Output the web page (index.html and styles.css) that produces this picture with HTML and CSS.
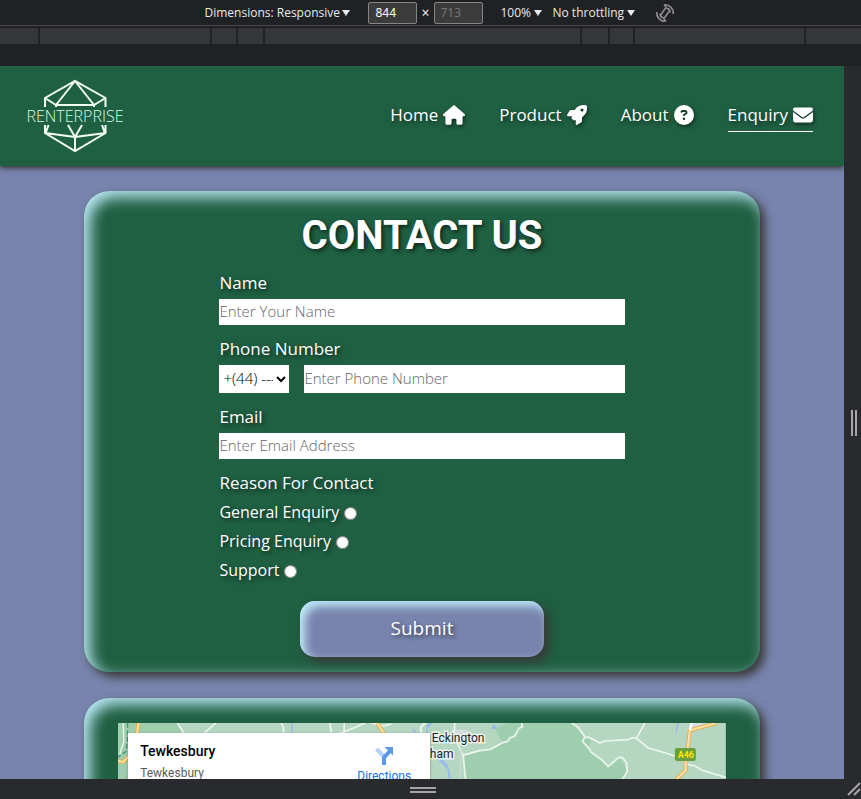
FILE: index.html
```html
<!DOCTYPE html>
<html lang="en">
<head>
<meta charset="utf-8">
<meta name="viewport" content="width=device-width, initial-scale=1">
<title>Renterprise - Enquiry</title>
<link rel="stylesheet" href="styles.css">
</head>
<body>
<div class="toolbar">
  <span class="picker"><select aria-label="Device"><option>Dimensions: Responsive</option></select></span>
  <div class="size">
    <input type="text" value="844" aria-label="Width">
    <span>×</span>
    <input type="text" placeholder="713" aria-label="Height">
  </div>
  <span class="picker"><select aria-label="Zoom"><option>100%</option></select></span>
  <span class="picker"><select aria-label="Throttling"><option>No throttling</option></select></span>
  <button class="rotate" type="button" aria-label="Rotate">
    <svg viewBox="0 0 20 20" width="20" height="20" fill="none" stroke="#8b8b8d" stroke-width="1.6">
      <rect x="7.600" y="5" width="4.800" height="10" rx="1.500" transform="rotate(35 10 10)"/>
      <path d="M1.800 9A8.300 8.300 0 0 0 11 18.200M5 10.500A5.500 5.500 0 0 0 7 15M11 18.200L8.500 15.500M18.200 11A8.300 8.300 0 0 0 9 1.800M15 9.500A5.500 5.500 0 0 0 13 5M9 1.800L11.500 4.500"/>
    </svg>
  </button>
</div>
<div class="ruler"><i></i><i></i><i></i><i></i><i></i><i></i><i></i><i></i><i></i></div>

<div class="stage">
  <div class="device">
    <header class="site-header">
      <a class="logo" href="#" aria-label="Renterprise">
        <svg viewBox="0 0 104 80" width="104" height="80">
          <g fill="none" stroke="#f1fff4" stroke-width="2">
            <path d="M22 31V22L52 5L82.500 22V31M22 22L33 29H71L82.500 22M33 31V29L52 5L71 29V31"/>
            <path d="M22 49V57L52 75L82.500 57V49M22 57L52 61L82.500 57M52 61V75M45 49L52 61L59 49M25.500 49L23 56M79 49L81.500 56"/>
          </g>
          <text x="52" y="46" text-anchor="middle">RENTERPRISE</text>
        </svg>
      </a>
      <nav class="nav">
        <a href="#">Home <svg viewBox="0 0 576 512" width="22" height="20"><path d="M575.8 255.5c0 18-15 32.100-32 32.100h-32l.7 160.200c0 2.700-.2 5.400-.5 8.100V472c0 22.100-17.900 40-40 40H392c-22.100 0-40-17.900-40-40V384c0-17.700-14.300-32-32-32H256c-17.700 0-32 14.300-32 32v88c0 22.100-17.900 40-40 40H104c-22.100 0-40-17.900-40-40V287.600H32c-18 0-32-14-32-32.100c0-9 3-17 10-24L266.400 8c7-7 15-8 22-8s15 2 21 7L564.800 231.500c8 7 12 15 11 24z"/></svg></a>
        <a href="#">Product <svg viewBox="0 0 512 512" width="20" height="20"><path d="M156.6 384.9L125.7 354c-8.5-8.5-11.5-20.8-7.7-32.2c3-8.9 7-20.5 11.8-33.8L24 288c-8.6 0-16.6-4.6-20.9-12.1s-4.2-16.7 .2-24.1l52.5-88.5c13-21.9 36.5-35.3 61.9-35.3l82.3 0c2.400-4 4.800-7.700 7.200-11.300C289.100-4.100 411.100-8.100 483.900 5.300c11.600 2.100 20.600 11.200 22.800 22.800c13.400 72.900 9.300 194.800-111.400 276.700c-3.500 2.400-7.300 4.800-11.300 7.200v82.300c0 25.400-13.400 49-35.300 61.900l-88.500 52.500c-7.400 4.400-16.600 4.500-24.100 .2s-12.100-12.200-12.100-20.900V380.800c-14.100 4.900-26.400 8.900-35.700 11.900c-11.200 3.600-23.400 .5-31.800-7.800zM384 168a40 40 0 1 0 0-80 40 40 0 1 0 0 80z"/></svg></a>
        <a href="#">About <svg viewBox="0 0 512 512" width="20" height="20"><path fill-rule="evenodd" d="M256 512A256 256 0 1 0 256 0a256 256 0 1 0 0 512zM169.800 165.300c7.900-22.300 29.100-37.300 52.800-37.300h58.300c34.900 0 63.100 28.300 63.100 63.100c0 22.600-12.100 43.500-31.700 54.800L280 264.400c-.2 13-10.900 23.600-24 23.600c-13.300 0-24-10.700-24-24V250.500c0-8.600 4.600-16.500 12.100-20.800l44.300-25.400c4.700-2.700 7.600-7.700 7.600-13.100c0-8.400-6.800-15.100-15.100-15.100H222.600c-3.400 0-6.400 2.100-7.500 5.300l-.4 1.200c-4.400 12.500-18.200 19-30.600 14.600s-19-18.200-14.600-30.600zM224 352a32 32 0 1 1 64 0 32 32 0 1 1 -64 0z"/></svg></a>
        <a class="active" href="#">Enquiry <svg viewBox="0 0 512 512" width="20" height="20"><path d="M48 64C21.500 64 0 85.500 0 112c0 15.100 7.100 29.300 19.200 38.400L236.800 313.600c11.400 8.500 27 8.500 38.400 0L492.800 150.400c12.100-9.100 19.200-23.300 19.200-38.400c0-26.500-21.500-48-48-48H48zM0 176V384c0 35.300 28.700 64 64 64H448c35.300 0 64-28.700 64-64V176L294.400 339.200c-22.800 17.100-54 17.100-76.800 0L0 176z"/></svg></a>
      </nav>
    </header>

    <main>
      <section class="card contact">
        <h1>CONTACT US</h1>
        <form>
          <label class="label" for="name">Name</label>
          <input class="field" id="name" type="text" placeholder="Enter Your Name">
          <label class="label" for="phone">Phone Number</label>
          <div class="phone">
            <select class="code" aria-label="Country code"><option>+(44) ---</option></select>
            <input class="field" id="phone" type="tel" placeholder="Enter Phone Number">
          </div>
          <label class="label" for="email">Email</label>
          <input class="field" id="email" type="email" placeholder="Enter Email Address">
          <fieldset>
            <legend class="label">Reason For Contact</legend>
            <div class="choice"><label for="general">General Enquiry</label><input type="radio" name="reason" id="general"></div>
            <div class="choice"><label for="pricing">Pricing Enquiry</label><input type="radio" name="reason" id="pricing"></div>
            <div class="choice"><label for="support">Support</label><input type="radio" name="reason" id="support"></div>
          </fieldset>
          <button class="submit" type="submit">Submit</button>
        </form>
      </section>

      <section class="card location">
        <div class="map">
          <svg class="map-art" viewBox="0 0 608 200" preserveAspectRatio="xMidYMin slice" aria-hidden="true">
            <rect width="608" height="200" fill="#b5d7c2"/>
            <g transform="translate(-48 -83) scale(.33333)" fill="none">
              <path d="M144 249H325L345 285H174V417H144Z" fill="#9fceaf"/>
              <path d="M345 285L323 249M438 249L404 279M634 249L641 262V285M780 249L785 285M823 249V275L795 285M823 275L860 260L885 249M905 249L940 258L965 252M1068 249L1052 262L1056 285" stroke="#eef5f0" stroke-width="5"/>
              <path d="M667 249V285M1028 267L1044 285M1085 249L1072 262L1070 285M1080 316L1098 340L1116 360L1135 385L1140 417M144 395L150 390" stroke="#94b9ef" stroke-width="4"/>
              <path d="M173 249V300L168 335L144 352" stroke="#3f9c6b" stroke-width="4" stroke-dasharray="14 7"/>
              <path d="M160 249L162 305L150 342" stroke="#eef5f0" stroke-width="4"/>
              <path d="M206 249L200 290M144 363L160 366L176 350M922 249L945 285" stroke="#e8b04a" stroke-width="12"/>
              <path d="M206 249L200 290M144 363L160 366L176 350M922 249L945 285" stroke="#fbe2a8" stroke-width="6"/>
            </g>
            <g transform="translate(302 -83) scale(.33333)" fill="none">
              <path d="M308 249L305 265L290 290L265 303L212 328L130 345L137 417L150 680H560L608 417L622 395L600 352L565 380L510 335L490 305L495 290L455 249Z" fill="#9fceaf"/>
              <path d="M225 265L262 249H308L305 265L290 285L265 303L245 302Z" fill="#9fceaf"/>
              <path d="M95 268L140 270L155 280L150 312H115Z" fill="#d3dcd8"/>
              <path d="M498 292L513 300L508 322L492 306Z" fill="#9fceaf"/>
              <path d="M815 249H860L815 268Z" fill="#dadfe4"/>
              <path d="M213 266L220 256L232 257L225 267Z" fill="#94b9ef"/>
              <path d="M775 249L768 277M20 262L30 249M28 318L58 352L85 385L90 417" stroke="#94b9ef" stroke-width="4"/>
              <path d="M60 358L82 380" stroke="#94b9ef" stroke-width="9"/>
              <path d="M0 270L12 249M105 249L102 290L130 345L137 417L142 550M128 346L180 332L212 328L245 310L265 303L268 295L285 287L297 265L308 260L305 249M455 249L475 262L495 290L488 305L508 325L513 336L535 352L545 358L565 380L597 352L608 353L621 370L622 395L608 417L590 500M495 292L508 292L540 309L555 303L625 299L637 293L650 295L675 249M650 295L685 324L745 341L765 349M798 372L825 378L850 392L918 412" stroke="#edf4ee" stroke-width="5"/>
              <path d="M124 330L120 417" stroke="#cbd8d3" stroke-width="4"/>
              <path d="M890 249L810 271L803 330L797 370L798 390L770 418L740 460" stroke="#e8b04a" stroke-width="12"/>
              <path d="M890 249L810 271L803 330L797 370L798 390L770 418L740 460" stroke="#fbe2b0" stroke-width="6"/>
              <path d="M815 249L810 270" stroke="#fff" stroke-width="7"/>
            </g>
            <g class="map-text">
              <text x="314" y="19">Eckington</text>
              <text x="312" y="35">ham</text>
            </g>
            <rect x="557" y="25" width="21" height="13" rx="2" fill="#689f38"/>
            <text class="map-road" x="568" y="35" text-anchor="middle">A46</text>
          </svg>
          <div class="place">
            <div>
              <h2>Tewkesbury</h2>
              <p>Tewkesbury</p>
            </div>
            <a href="#">
              <svg viewBox="0 0 18 18" width="18" height="18"><path d="M1.500 2L9 9.500" stroke="#b5d1f6" stroke-width="4" fill="none"/><path d="M9 18V10.500L15 4" stroke="#5a9ae6" stroke-width="4" fill="none"/><path d="M9.500 0H18V8.500Z" fill="#5a9ae6"/></svg>
              Directions
            </a>
          </div>
        </div>
      </section>
    </main>
  </div>
  <div class="handle-right"><i></i></div>
  <div class="handle-bottom"><i></i></div>
  <div class="handle-corner"><svg viewBox="0 0 14 14" width="14" height="14"><path d="M1 13L13 1M7 13L13 7" stroke="#a6a6a6" stroke-width="2"/></svg></div>
</div>
</body>
</html>
```
FILE: styles.css
```css
* { box-sizing: border-box; }

body {
  margin: 0;
  height: 100vh;
  display: flex;
  flex-direction: column;
  overflow: hidden;
  background: #202124;
  font-family: "Open Sans", "Noto Sans", sans-serif;
}

input, select, button { font: inherit; }

/* Device toolbar */
.toolbar {
  display: flex;
  align-items: center;
  justify-content: center;
  height: 26px;
  padding-left: 18px;
  border-bottom: 1px solid #4a4a4d;
  color: #e8eaed;
  font-family: "Noto Sans", sans-serif;
  font-size: 12px;
}
.picker { display: flex; align-items: center; gap: 2px; margin-right: 11px; }
.picker::after {
  content: "";
  border: 4px solid transparent;
  border-top: 6px solid #e8eaed;
  border-bottom: 0;
}
.picker select {
  appearance: none;
  border: 0;
  padding: 0;
  background: none;
  color: inherit;
  font-family: "Open Sans", sans-serif;
  font-size: 12px;
}
.size { display: flex; align-items: center; gap: 4px; margin: 0 18px 0 7px; font-size: 14px; }
.size input {
  width: 49px;
  height: 22px;
  padding: 0 6px;
  border: 1px solid #858585;
  border-radius: 2px;
  background: #3b3b3b;
  color: #fff;
  font-size: 12px;
}
.size input::placeholder { color: #757575; }
.rotate { display: flex; margin-left: 9px; padding: 0; border: 0; background: none; }

.ruler {
  display: grid;
  grid-template-columns: 38px 170px 24px 25px 1fr 26px 23px 169px 55px;
  gap: 2px;
  height: 16px;
  margin: 2px 0 22px;
}
.ruler i { background: #35363a; }

.stage {
  flex: 1;
  min-height: 0;
  display: grid;
  grid-template: 1fr 20px / 1fr 17px;
  background: #292a2d;
}
.handle-right, .handle-bottom, .handle-corner { display: flex; align-items: center; justify-content: center; }
.handle-right { padding-left: 3px; }
.handle-right i { width: 6px; height: 26px; border: solid #a6a6a6; border-width: 0 2px; }
.handle-bottom { padding: 2px 0 0 2px; }
.handle-bottom i { width: 26px; height: 6px; border: solid #a6a6a6; border-width: 2px 0; }
.handle-corner { padding-left: 3px; }

/* Site */
.device { min-width: 0; overflow: hidden; background: #7884ad; color: #fff; }

.site-header {
  position: relative;
  display: flex;
  align-items: center;
  justify-content: space-between;
  height: 100px;
  padding: 0 31px 0 23px;
  background: #1f5f42;
  box-shadow: 0 2px 5px #333;
}
.logo { display: flex; }
.logo text { fill: #d5fbe0; font-size: 16px; font-weight: 300; }

.nav { display: flex; gap: 34px; padding-bottom: 2px; font-size: 17px; }
.nav a {
  display: flex;
  align-items: center;
  gap: 5px;
  height: 34px;
  border-bottom: 1px solid transparent;
  color: #fff;
  text-decoration: none;
  text-shadow: 2px 2px 4px rgba(0, 0, 0, .5);
}
.nav a.active { border-color: #fff; }
.nav svg { fill: #fff; filter: drop-shadow(1px 2px 2px rgba(0, 0, 0, .5)); }

main { display: flex; flex-direction: column; align-items: center; gap: 26px; padding: 25px 0; }

.card {
  width: 80%;
  border-radius: 25px;
  background: #1f5f42;
  box-shadow: inset 6px 6px 15px #c0ecfa, 5px 5px 10px #3a3a3a;
}
.contact { padding: 17px 0 15px; }

h1 {
  margin: 0 0 5px;
  font: 700 40px/56px Roboto, sans-serif;
  text-align: center;
  text-shadow: 2px 2px 4px rgba(0, 0, 0, .6);
}

form { width: 60%; margin: 0 auto; text-shadow: 2px 2px 4px rgba(0, 0, 0, .6); }
.label { display: block; padding: 0 0 2px; font-size: 17px; line-height: 28px; }
.field {
  display: block;
  width: 100%;
  height: 26px;
  margin-bottom: 10px;
  padding: 0 0 3px;
  border: 0;
  background: #fff;
  color: #000;
  font-size: 15px;
  font-weight: 300;
}
.field::placeholder { color: #666; }
.phone { display: flex; gap: 15px; margin-bottom: 10px; }
.phone .field { flex: 1; width: auto; min-width: 0; height: 28px; margin: 0; }
.code {
  width: 70px;
  height: 28px;
  padding: 0 0 2px;
  border: 0;
  border-radius: 0;
  background: #fff;
  color: #000;
  font-size: 15px;
  font-weight: 300;
}

fieldset { margin: 0; padding: 0; border: 0; }
.choice { display: flex; align-items: center; height: 29px; font-size: 16px; }
.choice label { padding-bottom: 3px; }
.choice input { width: 13px; height: 13px; margin: 0 0 0 5px; }

.submit {
  display: block;
  width: 60%;
  height: 56px;
  margin: 15px auto 0;
  padding: 0 0 3px;
  border: 0;
  border-radius: 15px;
  background: #7884ad;
  box-shadow: inset 5px 5px 10px #c0ecfa, 5px 5px 10px #3a3a3a;
  color: #fff;
  font-size: 19px;
  text-shadow: inherit;
}

/* Map */
.location { padding: 25px 4%; }
.map { position: relative; height: 200px; overflow: hidden; font-family: Roboto, sans-serif; }
.map-art { display: block; width: 100%; height: 100%; }
.map-text { fill: #222; stroke: #e8f2ec; stroke-width: 3; paint-order: stroke; font-size: 12px; }
.map-road { fill: #ffe600; font-size: 9px; font-weight: 700; }
.place {
  position: absolute;
  top: 10px;
  left: 10px;
  display: flex;
  justify-content: space-between;
  width: 302px;
  height: 100px;
  padding: 10px 19px 0 12px;
  background: #fff;
  box-shadow: 0 1px 3px rgba(0, 0, 0, .3);
}
.place h2 { margin: 0 0 6px; color: #000; font-size: 14px; font-weight: 500; line-height: 16px; }
.place p { margin: 0; color: #5b5b5b; font-size: 12px; line-height: 16px; }
.place a {
  display: flex;
  flex-direction: column;
  align-items: center;
  gap: 4px;
  padding-top: 4px;
  color: #1a73e8;
  font-size: 12px;
  text-decoration: none;
}
```
